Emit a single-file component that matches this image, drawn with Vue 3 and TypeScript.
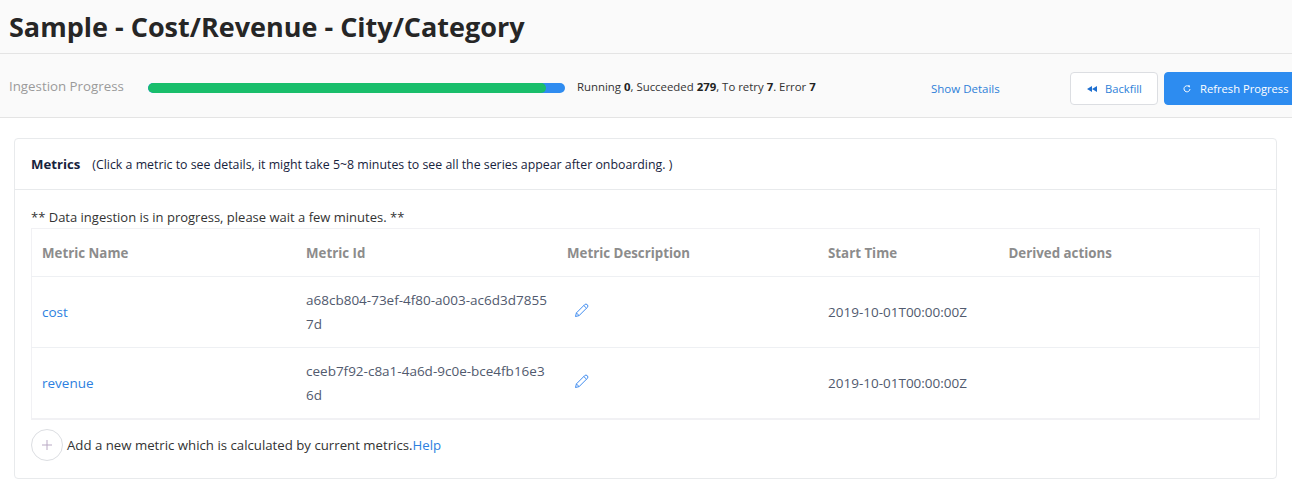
<script setup lang="ts">
interface Metric { name: string; id: string; start: string }
const metrics: Metric[] = [
  { name: 'cost', id: 'a68cb804-73ef-4f80-a003-ac6d3d78557d', start: '2019-10-01T00:00:00Z' },
  { name: 'revenue', id: 'ceeb7f92-c8a1-4a6d-9c0e-bce4fb16e36d', start: '2019-10-01T00:00:00Z' },
]
</script>

<template>
  <div class="page">
    <header class="title-bar"><h1>Sample - Cost/Revenue - City/Category</h1></header>
    <section class="progress-bar">
      <span class="label">Ingestion Progress</span>
      <div class="track"><div class="fill"></div></div>
      <span class="stats">Running <b>0</b>, Succeeded <b>279</b>, To retry <b>7</b>. Error <b>7</b></span>
      <a class="details">Show Details</a>
      <button class="btn ghost">
        <svg width="12" height="12" viewBox="0 0 12 12"><path d="M1 6l5-3v6zM6 6l5-3v6z" fill="#1e6fd0" /></svg>
        <span>Backfill</span>
      </button>
      <button class="btn primary">
        <svg width="8" height="8" viewBox="0 0 8 8"><path d="M5.9 1.5A3 3 0 1 0 7 4" fill="none" stroke="#fff" stroke-width="1" /><path d="M4.8 0.2l2.2.3-.3 2.2z" fill="#fff" /></svg>
        <span>Refresh Progress</span>
      </button>
    </section>
    <main class="content">
      <div class="card">
        <div class="card-head"><b>Metrics</b><span>(Click a metric to see details, it might take 5~8 minutes to see all the series appear after onboarding. )</span></div>
        <div class="card-body">
          <p class="notice">** Data ingestion is in progress, please wait a few minutes. **</p>
          <table>
            <colgroup><col class="c1" /><col class="c2" /><col class="c3" /><col class="c4" /><col /></colgroup>
            <thead>
              <tr><th>Metric Name</th><th>Metric Id</th><th>Metric Description</th><th>Start Time</th><th>Derived actions</th></tr>
            </thead>
            <tbody>
              <tr v-for="m in metrics" :key="m.name">
                <td><a>{{ m.name }}</a></td>
                <td class="id">{{ m.id }}</td>
                <td>
                  <svg class="pencil" width="16" height="16" viewBox="0 0 16 16"><path d="M1.5 14.5l.9-3.6 8.2-8.2a1.5 1.5 0 0 1 2.7 2.7l-8.2 8.2zM2.4 10.9l2.7 2.7M9.8 3.5l2.7 2.7" fill="none" stroke="#3f8cf0" stroke-width="1" /></svg>
                </td>
                <td>{{ m.start }}</td>
                <td></td>
              </tr>
            </tbody>
          </table>
          <div class="add-row">
            <span class="plus"><svg width="10" height="10" viewBox="0 0 10 10"><path d="M5 0v10M0 5h10" stroke="#b9a9c4" stroke-width="1" /></svg></span>
            <span>Add a new metric which is calculated by current metrics.</span><a>Help</a>
          </div>
        </div>
      </div>
    </main>
  </div>
</template>

<style>
html, body { margin: 0; overflow: hidden; background: #fff; }
</style>

<style scoped>
.page { width: 1292px; height: 485px; overflow: hidden; font-family: "Open Sans", "Noto Sans", sans-serif; font-size: 12px; color: #333; }
.title-bar { height: 53px; background: #fafafa; border-bottom: 1px solid #e4e4e4; padding-left: 9px; overflow: hidden; }
h1 { margin: 0; font-size: 27px; line-height: 54px; font-weight: 700; color: #262626; white-space: nowrap; }
.progress-bar { height: 63px; background: #fafafa; border-bottom: 1px solid #e4e4e4; display: flex; align-items: center; white-space: nowrap; }
.progress-bar > * { flex: none; }
.label { width: 139px; margin-left: 9px; color: #9a9a9a; font-size: 13.3px; }
.track { width: 417px; height: 10px; border-radius: 5px; background: #2f8cf0; overflow: hidden; position: relative; top: 2px; }
.fill { width: 398px; height: 10px; border-radius: 5px; background: #19be6b; }
.stats { width: 354px; margin-left: 12px; font-size: 11.4px; color: #333; position: relative; top: 1px; }
.stats b { color: #222; }
.details { width: 139px; color: #2d7fd8; font-size: 11.5px; position: relative; top: 3px; }
.btn { height: 33px; box-sizing: border-box; border-radius: 4px; font: inherit; font-size: 11.2px; display: inline-flex; align-items: center; padding: 0; position: relative; top: 3px; }
.ghost { width: 88px; background: #fff; border: 1px solid #dcdee2; color: #2d7fd8; padding-left: 15px; gap: 7px; }
.primary { width: 140px; margin-left: 6px; background: #2d8cf0; border: 1px solid #2d8cf0; color: #fff; padding-left: 18px; gap: 9px; }
.content { padding: 20px 15px 0 14px; }
.card { height: 339px; border: 1px solid #e8eaec; border-radius: 4px; }
.card-head { height: 50px; border-bottom: 1px solid #e8eaec; display: flex; align-items: center; padding-left: 16px; color: #17233d; }
.card-head b { margin-right: 12px; font-size: 13.2px; }
.card-head span { font-size: 12.35px; }
.card-body { padding: 0 17px 0 16px; }
.notice { margin: 0; padding-top: 19px; height: 19px; line-height: 16px; font-size: 13px; color: #333; }
table { width: 1229px; border-collapse: collapse; table-layout: fixed; border: 1px solid #f1f1f4; border-width: 1px 1px 2px; font-size: 13.5px; color: #515a6e; }
.c1 { width: 264.5px; } .c2 { width: 261px; } .c3 { width: 261px; } .c4 { width: 180.5px; }
th { height: 47px; text-align: left; padding: 0 10px; color: #8c8c8c; font-size: 13.3px; font-weight: 700; border-bottom: 1px solid #eef0f3; }
td { height: 70px; padding: 0 10px; border-bottom: 1px solid #eef0f3; line-height: 24px; }
tbody tr:last-child td { border-bottom: 0; }
td a { color: #2d7fe0; }
.id { word-break: break-all; }
.pencil { display: block; margin-left: 7px; position: relative; top: -2px; }
.add-row { display: flex; align-items: center; margin-top: 9px; font-size: 13.23px; color: #333; }
.plus { width: 32px; height: 32px; box-sizing: border-box; border: 1px solid #dcdee2; border-radius: 50%; display: flex; align-items: center; justify-content: center; margin-right: 4px; }
.add-row a { color: #2d7fe0; }
</style>
